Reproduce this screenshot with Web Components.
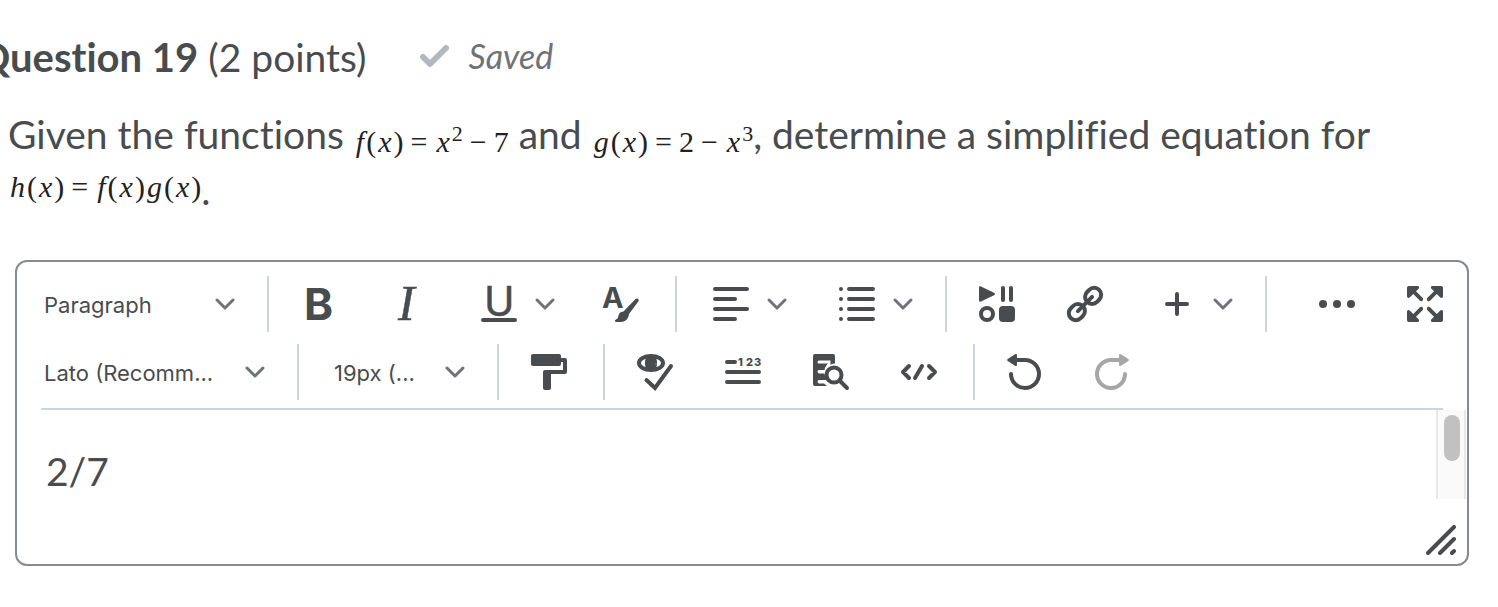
<!DOCTYPE html>
<html lang="en">
<head>
<meta charset="utf-8">
<meta name="viewport" content="width=device-width, initial-scale=1">
<title>Question 19</title>
<style>
  body { margin: 0; background: #fff; color: #494c4e; font-family: Lato, "Liberation Sans", sans-serif; font-size: 39px; font-variant-ligatures: none; overflow-x: hidden; }
</style>
</head>
<body>
<quiz-question></quiz-question>

<script>
const ICONS = {
  bold: '<text x="3" y="34" font-family="Inter,sans-serif" font-weight="700" font-size="44">B</text>',
  italic: '<text x="9" y="34" font-family="Liberation Serif,serif" font-style="italic" font-size="50" stroke="currentColor" stroke-width="0.5">I</text>',
  underline: '<text x="3" y="30" font-family="Inter,sans-serif" font-size="41" stroke="currentColor" stroke-width="0.5">U</text><rect y="32" width="36" height="4" rx="2"/>',
  format: '<text x="-1" y="22" font-family="Inter,sans-serif" font-weight="700" font-size="29">A</text><path d="M32.500 13c1.800-1.600 4.200.2 3 2.300L26 28c-.3 4-3 8-8 8h-5c-1.500-.5-1.500-2 0-2.500 2-.7 2-2 2.500-4 .6-2.500 2.600-4 5-4z"/>',
  align: '<path d="M2 3h32M2 13h20M2 23h32M2 33h20" fill="none" stroke="currentColor" stroke-width="4" stroke-linecap="round"/>',
  list: '<path d="M10 3h24M10 13h24M10 23h24M10 33h24" fill="none" stroke="currentColor" stroke-width="4" stroke-linecap="round"/><circle cx="2" cy="3" r="2"/><circle cx="2" cy="13" r="2"/><circle cx="2" cy="23" r="2"/><circle cx="2" cy="33" r="2"/>',
  media: '<path d="M0 1.500C0 .3 1 0 2 .4l13 6.300c1.300.6 1.300 2 0 2.600l-13 6.300c-1 .4-2 0-2-1.100z"/><rect x="22" width="4" height="16" rx="2"/><rect x="30" width="4" height="16" rx="2"/><circle cx="8" cy="28" r="6" fill="none" stroke="currentColor" stroke-width="4"/><rect x="20" y="20" width="16" height="16" rx="4"/>',
  link: '<g fill="none" stroke="currentColor" stroke-width="4" transform="rotate(-45 18 18)"><rect x="-2" y="11" width="17" height="14" rx="7"/><rect x="21" y="11" width="17" height="14" rx="7"/><path d="M8 18h20" stroke-linecap="round"/></g>',
  plus: '<path d="M8 18h20M18 8v20" fill="none" stroke="currentColor" stroke-width="4" stroke-linecap="round"/>',
  more: '<circle cx="4" cy="18" r="4"/><circle cx="18" cy="18" r="4"/><circle cx="32" cy="18" r="4"/>',
  full: '<g id="a"><path d="M2 0h8.500c2 0 2 1.800 1 2.800L9 5.300l6.500 6.500c1.800 2-.8 4.800-2.800 2.800L6.200 8.100 3 11.300c-1 1-3 1-3-1V2c0-1.300.7-2 2-2z"/></g><use href="#a" transform="matrix(-1 0 0 1 36 0)"/><use href="#a" transform="matrix(1 0 0 -1 0 36)"/><use href="#a" transform="matrix(-1 0 0 -1 36 36)"/>',
  paint: '<rect width="30" height="12" rx="2"/><path d="M29 4h5q2 0 2 2v12q0 2-2 2H20v14q0 2-2 2h-4q-2 0-2-2V18q0-2 2-2h18V8h-3z"/>',
  spell: '<ellipse cx="14" cy="9" rx="12" ry="7" fill="none" stroke="currentColor" stroke-width="4"/><path d="M9 4c3-2 7-2 10 0 1.500 3 1.500 7 0 10-3 2-7 2-10 0-1.500-3-1.500-7 0-10z"/><circle cx="19" cy="10" r="1" fill="#777"/><path d="M9.500 26l8.500 8 16-22" fill="none" stroke="currentColor" stroke-width="4" stroke-linecap="round"/>',
  count: '<path d="M2 8h8M2 18h32M2 28h32" fill="none" stroke="currentColor" stroke-width="4" stroke-linecap="round"/><text y="12" x="13 21 29" font-family="Inter,sans-serif" font-weight="800" font-size="11">123</text>',
  find: '<path d="M2 0h18q2 0 2 2v7.500c-2 0-3 .5-4.500 1.500V6.500H6q-1.500 0-1.500 1.500T6 9.500h9c-2 2-3 4-3.500 6.500H6q-1.500 0-1.500 1.500T6 19.500h5.500c.3 2.500 1 4.500 2.500 6.500H6q-1.500 0-1.500 1.500T6 29.500h5l3 2.500H2q-2 0-2-2V2q0-2 2-2z"/><circle cx="21" cy="21" r="7.500" fill="none" stroke="currentColor" stroke-width="4"/><path d="M27 27l7 7" stroke="currentColor" stroke-width="4" stroke-linecap="round"/>',
  code: '<path d="M8 12l-6 6 6 6M28 12l6 6-6 6M21 12l-7 12" fill="none" stroke="currentColor" stroke-width="4" stroke-linecap="round" stroke-linejoin="round"/>',
  undo: '<path d="M4 20a14 14 0 1 0 14-14H9" fill="none" stroke="currentColor" stroke-width="4" stroke-linecap="round"/><path d="M8 .3q2-.9 2 1v9.400q0 1.900-2 1L.7 7.100q-1.400-1.100 0-2.200z"/>',
  redo: '<path d="M30 20a14 14 0 1 1-14-14h9" fill="none" stroke="currentColor" stroke-width="4" stroke-linecap="round"/><path d="M26 .3q-2-.9-2 1v9.400q0 1.900 2 1l7.300-4.600q1.400-1.100 0-2.200z"/>'
};
const CHEVRON = '<svg class="chev" width="20" height="12" viewBox="0 0 20 12" aria-hidden="true"><path d="M2 2l8 8 8-8" fill="none" stroke="#6e7376" stroke-width="3" stroke-linecap="round" stroke-linejoin="round"/></svg>';

function define(name, render) {
  customElements.define(name, class extends HTMLElement {
    connectedCallback() {
      if (this.shadowRoot) return;
      this.attachShadow({ mode: 'open' }).innerHTML = render(this);
    }
  });
}

/* Toolbar button; with the "menu" attribute it also carries a chevron. */
define('tool-button', el => `
  <style>
    :host { display: block; flex: none; }
    button { display: flex; align-items: center; height: 56px; margin: 0; padding: 0 24px; border: 0; border-radius: 8px; background: none; color: #494c4e; }
    button:hover:enabled { background: #f1f5fb; }
    button:disabled { color: #a5a6a7; }
    :host([menu]) button { padding: 0 20px 0 28px; gap: 18px; }
    svg { display: block; flex: none; overflow: visible; }
  </style>
  <button type="button" aria-label="${el.getAttribute('label')}" ${el.hasAttribute('disabled') ? 'disabled' : ''}>
    <svg width="36" height="36" viewBox="0 0 36 36" fill="currentColor" aria-hidden="true">${ICONS[el.getAttribute('icon')]}</svg>
    ${el.hasAttribute('menu') ? CHEVRON : ''}
  </button>`);

define('tool-select', el => `
  <style>
    :host { display: grid; flex: none; align-items: center; width: 238px; }
    :host([size="wide"]) { width: 268px; }
    :host([size="narrow"]) { width: 178px; }
    select, .chev { grid-area: 1 / 1; }
    select { appearance: none; width: 100%; height: 56px; margin: 0; padding: 2px 48px 0 27px; border: 0; background: none; color: #494c4e; font: 22px/32px Inter, "Liberation Sans", sans-serif; }
    .chev { justify-self: end; margin-right: 20px; pointer-events: none; }
  </style>
  <select aria-label="${el.getAttribute('label')}"><option>${el.getAttribute('value')}</option></select>${CHEVRON}`);

define('tool-divider', () => `
  <style>
    :host { display: block; flex: none; width: 2px; height: 56px; margin: 0 4px 0 8px; background: #cdd5dc; }
  </style>`);

define('tool-row', () => `
  <style>
    :host { display: flex; align-items: center; gap: 4px; }
    ::slotted([push]) { margin-left: auto; }
  </style>
  <slot></slot>`);

define('math-expr', () => `
  <style>
    :host { display: inline-block; font: 30px/40px "Liberation Serif", serif; color: #222; white-space: nowrap; vertical-align: -3px; }
    :host([raised]) { vertical-align: 8px; }
    ::slotted(b) { font-weight: 400; margin: 0 7px; }
    ::slotted(sup) { font-size: 22px; line-height: 20px; }
    ::slotted(i) { margin: 0 2px; }
  </style>
  <slot></slot>`);

define('save-status', () => `
  <style>
    :host { display: flex; align-items: center; gap: 18px; margin-bottom: 2px; color: #6e7376; font-size: 34px; line-height: 40px; font-style: italic; }
    svg { display: block; }
  </style>
  <svg width="32" height="24" viewBox="0 0 32 24" aria-hidden="true"><path d="M4 13l7 7L27 4" fill="none" stroke="#b1b9be" stroke-width="6" stroke-linecap="round" stroke-linejoin="round"/></svg>
  <slot></slot>`);

define('html-editor', () => `
  <style>
    :host { display: block; box-sizing: border-box; border: 2px solid #868b8f; border-radius: 12px; }
    .tools { display: grid; gap: 12px; padding: 14px 0 8px; }
    hr { height: 2px; margin: 0 24px; border: 0; background: #cdd5dc; }
    .body { display: flex; height: 89px; padding-right: 1px; }
    textarea { flex: 1; min-width: 0; margin: 0; padding: 37px 0 0 29px; border: 0; outline: 0; resize: none; overflow: hidden; background: none; color: inherit; font: 39px/48px Lato, sans-serif; }
    .track { box-sizing: border-box; width: 30px; padding: 5px 4px 0 6px; border: solid #e8e8e8; border-width: 0 2px; background: #fafafa; }
    .thumb { width: 16px; height: 46px; border-radius: 8px; background: #c1c1c1; }
    footer { display: flex; justify-content: flex-end; padding: 26px 11px 9px; }
    footer svg { display: block; }
  </style>
  <div class="tools">
    <tool-row>
      <tool-select label="Format" value="Paragraph"></tool-select>
      <tool-divider></tool-divider>
      <tool-button icon="bold" label="Bold"></tool-button>
      <tool-button icon="italic" label="Italic"></tool-button>
      <tool-button icon="underline" label="Underline" menu></tool-button>
      <tool-button icon="format" label="Text style"></tool-button>
      <tool-divider></tool-divider>
      <tool-button icon="align" label="Alignment" menu></tool-button>
      <tool-button icon="list" label="List" menu></tool-button>
      <tool-divider></tool-divider>
      <tool-button icon="media" label="Insert media"></tool-button>
      <tool-button icon="link" label="Insert link"></tool-button>
      <tool-button icon="plus" label="Insert" menu></tool-button>
      <tool-divider></tool-divider>
      <tool-button push icon="more" label="More actions"></tool-button>
      <tool-button icon="full" label="Full screen"></tool-button>
    </tool-row>
    <tool-row>
      <tool-select size="wide" label="Font" value="Lato (Recomm..."></tool-select>
      <tool-divider></tool-divider>
      <tool-select size="narrow" label="Font size" value="19px (..."></tool-select>
      <tool-divider></tool-divider>
      <tool-button icon="paint" label="Format painter"></tool-button>
      <tool-divider></tool-divider>
      <tool-button icon="spell" label="Check accessibility"></tool-button>
      <tool-button icon="count" label="Word count"></tool-button>
      <tool-button icon="find" label="Preview"></tool-button>
      <tool-button icon="code" label="Source code"></tool-button>
      <tool-divider></tool-divider>
      <tool-button icon="undo" label="Undo"></tool-button>
      <tool-button icon="redo" label="Redo" disabled></tool-button>
    </tool-row>
  </div>
  <hr>
  <div class="body">
    <textarea aria-label="Answer">2/7</textarea>
    <div class="track"><div class="thumb"></div></div>
  </div>
  <footer><svg width="30" height="30" viewBox="0 0 30 30" aria-hidden="true"><path d="M2 28L28 2M14 28l14-14M26 28l2-2" fill="none" stroke="#494c4e" stroke-width="4" stroke-linecap="round"/></svg></footer>`);

define('quiz-question', () => `
  <style>
    :host { display: block; padding: 32px 29px 40px 0; }
    header { display: flex; align-items: center; gap: 52px; margin-left: -22px; }
    h2 { margin: 0; font-size: 39px; line-height: 50px; font-weight: 400; }
    strong { font-size: 40px; }
    p { margin: 24px 0 0 8px; line-height: 56px; }
    html-editor { margin: 42px 0 0 15px; }
  </style>
  <header><h2><strong>Question 19</strong> (2 points)</h2><save-status>Saved</save-status></header>
  <p>Given the functions <math-expr><i>f</i>(<i>x</i>)<b>=</b><i>x</i><sup>2</sup><b>−</b>7</math-expr> and <math-expr><i>g</i>(<i>x</i>)<b>=</b>2<b>−</b><i>x</i><sup>3</sup></math-expr>, determine a simplified equation for <math-expr raised><i>h</i>(<i>x</i>)<b>=</b><i>f</i>(<i>x</i>)<i>g</i>(<i>x</i>)</math-expr>.</p>
  <html-editor></html-editor>`);
</script>
</body>
</html>
